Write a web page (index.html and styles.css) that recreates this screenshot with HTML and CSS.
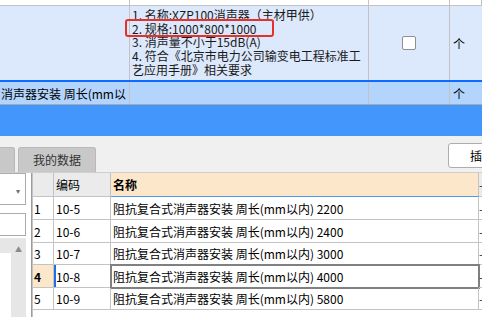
FILE: index.html
```html
<!DOCTYPE html>
<html lang="zh-CN">
  <head>
    <meta charset="UTF-8" />
    <title>清单定额</title>
    <link rel="stylesheet" href="styles.css">
  </head>
  <body>
    <div class="sheet">
      <div class="row strip">
        <div class="cell"></div>
        <div class="cell"></div>
        <div class="cell"></div>
        <div class="cell"></div>
      </div>
      <div class="row desc">
        <div class="cell"></div>
        <div class="cell feature">
          <div class="line">1. 名称:XZP100消声器（主材甲供）</div>
          <div class="line">2. 规格:1000*800*1000</div>
          <div class="line">3. 消声量不小于15dB(A)</div>
          <div class="line">4. 符合《北京市电力公司输变电工程标准工</div>
          <div class="line">艺应用手册》相关要求</div>
          <span class="mark"></span>
        </div>
        <div class="cell center"><span class="check"></span></div>
        <div class="cell unit">个</div>
      </div>
      <div class="row current">
        <div class="cell name">消声器安装 周长(mm以</div>
        <div class="cell"></div>
        <div class="cell"></div>
        <div class="cell unit">个</div>
      </div>
    </div>

    <div class="band"></div>

    <div class="toolbar">
      <div class="tab stub"></div>
      <div class="tab">我的数据</div>
      <button class="btn">插</button>
    </div>

    <div class="main">
      <div class="side">
        <div class="combo"><span class="arrow">▾</span></div>
        <div class="search"></div>
        <div class="tree">
          <div class="tree-top"><span class="up">▲</span></div>
          <div class="tree-body">
            <div class="tree-list"></div>
            <div class="tree-bar"></div>
          </div>
        </div>
      </div>

      <div class="grid">
        <div class="hd"></div>
        <div class="hd">编码</div>
        <div class="hd sorted">名称</div>
        <div class="hd more">-</div>

        <div class="no">1</div>
        <div class="td">10-5</div>
        <div class="td">阻抗复合式消声器安装 周长(mm以内) 2200</div>
        <div class="td more">-</div>

        <div class="no">2</div>
        <div class="td">10-6</div>
        <div class="td">阻抗复合式消声器安装 周长(mm以内) 2400</div>
        <div class="td more">-</div>

        <div class="no">3</div>
        <div class="td">10-7</div>
        <div class="td">阻抗复合式消声器安装 周长(mm以内) 3000</div>
        <div class="td more">-</div>

        <div class="no active">4</div>
        <div class="td focus">10-8</div>
        <div class="td picked">阻抗复合式消声器安装 周长(mm以内) 4000</div>
        <div class="td more">-</div>

        <div class="no">5</div>
        <div class="td">10-9</div>
        <div class="td">阻抗复合式消声器安装 周长(mm以内) 5800</div>
        <div class="td more">-</div>
      </div>
    </div>
  </body>
</html>
```

FILE: styles.css
```css
* {
  box-sizing: border-box;
}

body {
  margin: 0;
  width: 482px;
  height: 317px;
  overflow: hidden;
  background-color: #ffffff;
  font-family: "Noto Sans CJK SC", "Noto Sans", sans-serif;
  font-size: 12px;
  color: #000;
}

/* top sheet */
.row {
  display: grid;
  grid-template-columns: 130px 239px 81px 1fr;
}

.cell {
  border-right: 1px solid #c3c3c3;
  overflow: hidden;
  white-space: nowrap;
}

.strip {
  height: 6px;
  border-bottom: 1px solid #c3c3c3;
}

.desc {
  height: 74px;
  background-color: #dce8fc;
}

.feature {
  position: relative;
  padding: 2px 0 0 2px;
  color: #1a1a1a;
  overflow: visible;
}

.feature .line {
  height: 13.7px;
  line-height: 13.7px;
}

.mark {
  position: absolute;
  left: -5px;
  top: 13px;
  width: 149px;
  height: 18px;
  border: 2px solid #e8302a;
  border-radius: 3px;
}

.center {
  display: flex;
  align-items: center;
  justify-content: center;
}

.check {
  width: 14px;
  height: 14px;
  background-color: #fff;
  border: 1px solid #8f8f8f;
  border-radius: 2px;
}

.unit {
  display: flex;
  align-items: center;
  padding-left: 3px;
  border-right: 0;
}

.current {
  height: 25px;
  background-color: #b3d4fd;
  border-top: 2px solid #0b6cff;
  border-bottom: 1px solid #a9a9a9;
}

.current .cell {
  display: flex;
  align-items: center;
}

.name {
  padding-left: 1px;
}

.band {
  height: 31px;
  background-color: #4296fc;
}

/* tabs */
.toolbar {
  display: flex;
  align-items: flex-end;
  gap: 3px;
  height: 36px;
  background-color: #f0f0f0;
}

.tab {
  width: 78px;
  height: 25px;
  line-height: 24px;
  text-align: center;
  background-color: #c8c8c8;
  border: 1px solid #b9b9b9;
  border-bottom: 0;
  border-radius: 3px 3px 0 0;
  color: #333;
}

.tab.stub {
  width: 15px;
  border-left: 0;
  border-radius: 0 3px 0 0;
}

.btn {
  align-self: flex-start;
  margin: 7px -26px 0 auto;
  width: 60px;
  height: 25px;
  flex-shrink: 0;
  background-color: #fff;
  border: 1px solid #adadad;
  border-radius: 3px;
  font-family: inherit;
  font-size: 12px;
  text-align: left;
  padding-left: 21px;
  color: #000;
}

/* lower area */
.main {
  display: flex;
  height: 145px;
  border-top: 1px solid #cfcfcf;
}

.side {
  width: 32px;
  flex-shrink: 0;
  border-right: 1px solid #9c9c9c;
  display: flex;
  flex-direction: column;
}

.combo {
  width: 26px;
  height: 32px;
  background-color: #fff;
  border: 1px solid #ababab;
  border-left: 0;
  position: relative;
}

.arrow {
  position: absolute;
  right: 5px;
  top: 11px;
  font-size: 8px;
  color: #707070;
}

.search {
  width: 26px;
  height: 23px;
  margin-top: 8px;
  border: 1px solid #ababab;
  border-left: 0;
}

.tree {
  width: 26px;
  flex: 1;
  margin-top: 2px;
  background-color: #e6e6e6;
  display: flex;
  flex-direction: column;
}

.tree-top {
  height: 15px;
  text-align: right;
  padding-right: 4px;
}

.up {
  font-size: 7px;
  color: #8a8a8a;
  line-height: 15px;
}

.tree-body {
  flex: 1;
  display: flex;
}

.tree-list {
  width: 11px;
  background-color: #fff;
}

.tree-bar {
  flex: 1;
}

.grid {
  flex: 1;
  display: grid;
  grid-template-columns: 21px 57px 368px 1fr;
  grid-template-rows: 24px 23px 23px 22px 23px 22px;
  align-content: start;
  border-left: 1px solid #c3c3c3;
}

.grid > div {
  border-right: 1px solid #c3c3c3;
  border-bottom: 1px solid #c3c3c3;
  display: flex;
  align-items: center;
  padding-left: 2px;
  white-space: nowrap;
  overflow: hidden;
}

.hd {
  background-color: #ebebeb;
}

.hd.sorted {
  background-color: #fde7ca;
  border-bottom-color: #4a9bf5 !important;
  font-weight: bold;
}

.grid > .more {
  border-right: 0;
  padding-left: 0;
  color: #333;
}

.no {
  padding-left: 1px !important;
}

.no.active {
  background-color: #fde7ca;
  font-weight: bold;
}

.focus {
  box-shadow: inset 2px 0 0 #1f6feb;
}

.picked {
  outline: 2px solid #808080;
  outline-offset: -1px;
}
```
